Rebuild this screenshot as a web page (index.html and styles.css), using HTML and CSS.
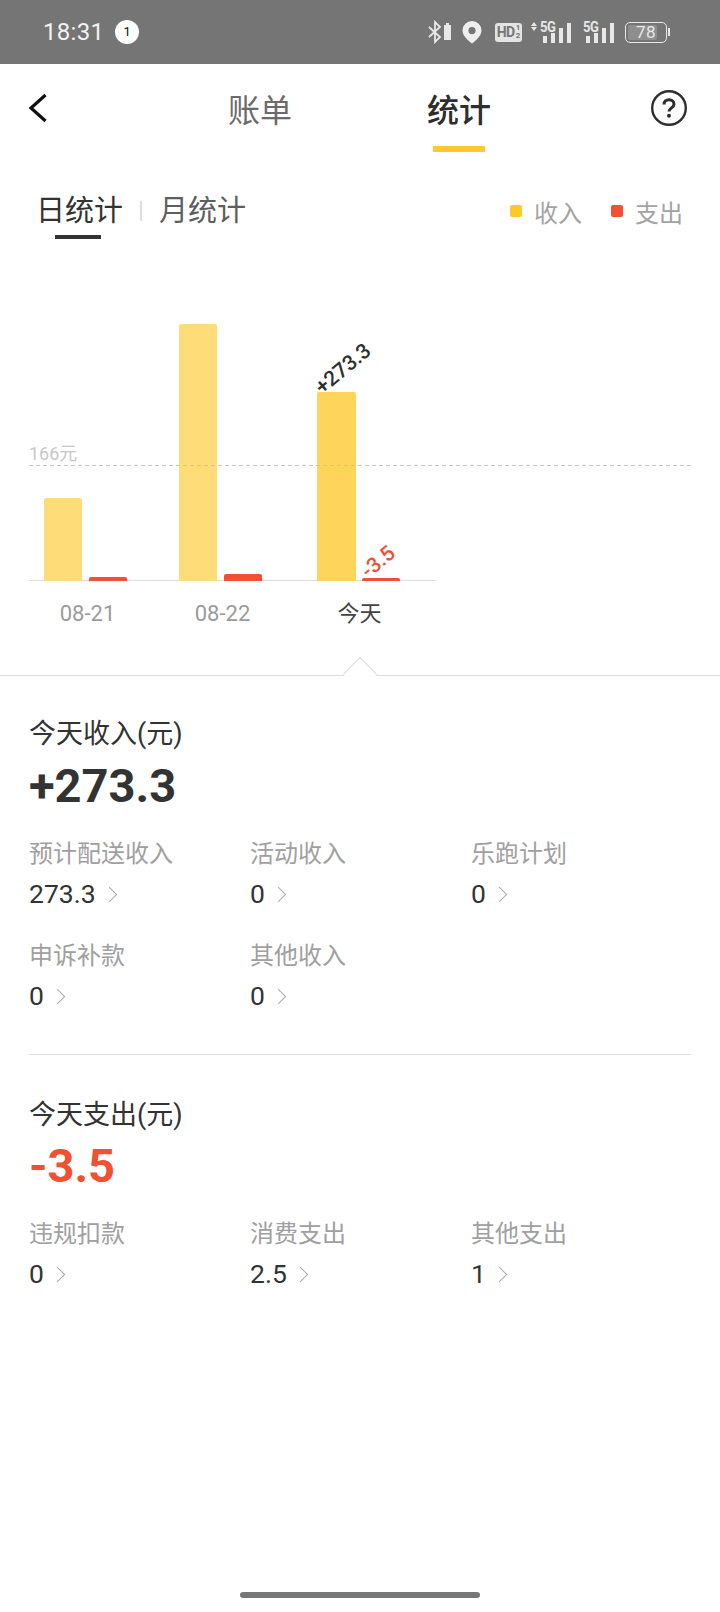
FILE: index.html
```html
<!DOCTYPE html>
<html lang="zh-CN">

<head>
    <meta charset="UTF-8">
    <meta name="viewport" content="width=device-width, initial-scale=1.0">
    <title>统计</title>
    <link rel="stylesheet" href="styles.css">
</head>

<body>
    <div class="status">
        <div class="status-left">
            <span class="time">18:31</span>
            <span class="notice">1</span>
        </div>
        <div class="status-right">
            <svg width="24" height="24" viewBox="0 0 24 24" fill="none">
                <path d="M1 7l11 10-5 5V2l5 5L1 17" stroke="#e8e8e8" stroke-width="1.8" />
                <path d="M16 5h2V3h3v2h2v15h-7z" fill="#e8e8e8" />
            </svg>
            <svg class="pin" width="20" height="24" viewBox="0 0 20 24">
                <path fill-rule="evenodd" fill="#eee" d="M10 1a9.500 9.500 0 0 1 9.500 9.500c0 5-5 9.500-9.500 13-4.500-3.500-9.500-8-9.500-13A9.500 9.500 0 0 1 10 1zm0 6a3.600 3.600 0 1 0 0 7.200A3.600 3.600 0 0 0 10 7z" />
            </svg>
            <span class="hd"><b>HD</b><i>1<br>2</i></span>
            <span class="net">
                <span class="arrows"></span>
                <span class="five">5G</span>
                <span class="sig">
                    <i class="s1"></i><i class="s2"></i><i class="s3"></i><i class="s4"></i>
                </span>
            </span>
            <span class="net second">
                <span class="five">5G</span>
                <span class="sig">
                    <i class="s1"></i><i class="s2"></i><i class="s3"></i><i class="s4"></i>
                </span>
            </span>
            <span class="battery"><span class="level"></span><span class="pct">78</span></span>
            <span class="cap"></span>
        </div>
    </div>

    <header class="nav">
        <svg class="back" width="20" height="30" viewBox="0 0 20 30" fill="none">
            <path d="M17.500 2L3 15l14.500 13" stroke="#111" stroke-width="3.200" />
        </svg>
        <div class="nav-tabs">
            <span class="nav-tab">账单</span>
            <span class="nav-tab active">统计</span>
        </div>
        <svg class="help" width="38" height="38" viewBox="0 0 38 38" fill="none">
            <circle cx="19" cy="19" r="16.800" stroke="#2e2e2e" stroke-width="2.400" />
            <path d="M14 15.500c0-3 2.200-4.800 5-4.800s5 1.900 5 4.500c0 3.600-5 3.800-5 7.400" stroke="#2e2e2e" stroke-width="3" />
            <circle cx="19" cy="26.800" r="2" fill="#2e2e2e" />
        </svg>
    </header>

    <div class="sub">
        <div class="sub-tabs">
            <span class="sub-tab active">日统计</span>
            <span class="sub-sep"></span>
            <span class="sub-tab">月统计</span>
        </div>
        <div class="legend">
            <span class="dot yellow"></span>
            <span class="legend-text">收入</span>
            <span class="dot red"></span>
            <span class="legend-text">支出</span>
        </div>
    </div>

    <div class="chart">
        <div class="avg">
            <span>166元</span>
        </div>
        <div class="plot">
            <div class="group">
                <div class="bar in" style="height: 83px"></div>
                <div class="bar out" style="height: 4px"></div>
            </div>
            <div class="group">
                <div class="bar in" style="height: 257px"></div>
                <div class="bar out" style="height: 7px"></div>
            </div>
            <div class="group">
                <div class="bar in today" style="height: 189px">
                    <span class="tip">+273.3</span>
                </div>
                <div class="bar out" style="height: 3px">
                    <span class="tip minus">-3.5</span>
                </div>
            </div>
        </div>
        <div class="dates">
            <span>08-21</span>
            <span>08-22</span>
            <span class="now">今天</span>
        </div>
    </div>

    <div class="rule">
        <span class="notch"></span>
    </div>

    <section class="block first">
        <h2>今天收入(元)</h2>
        <div class="total">+273.3</div>
        <div class="items">
            <div class="item">
                <div class="label">预计配送收入</div>
                <div class="value">273.3<span class="arrow"></span></div>
            </div>
            <div class="item">
                <div class="label">活动收入</div>
                <div class="value">0<span class="arrow"></span></div>
            </div>
            <div class="item">
                <div class="label">乐跑计划</div>
                <div class="value">0<span class="arrow"></span></div>
            </div>
            <div class="item">
                <div class="label">申诉补款</div>
                <div class="value">0<span class="arrow"></span></div>
            </div>
            <div class="item">
                <div class="label">其他收入</div>
                <div class="value">0<span class="arrow"></span></div>
            </div>
        </div>
    </section>

    <div class="line"></div>

    <section class="block">
        <h2>今天支出(元)</h2>
        <div class="total minus">-3.5</div>
        <div class="items">
            <div class="item">
                <div class="label">违规扣款</div>
                <div class="value">0<span class="arrow"></span></div>
            </div>
            <div class="item">
                <div class="label">消费支出</div>
                <div class="value">2.5<span class="arrow"></span></div>
            </div>
            <div class="item">
                <div class="label">其他支出</div>
                <div class="value">1<span class="arrow"></span></div>
            </div>
        </div>
    </section>

    <div class="home"></div>
</body>

</html>
```

FILE: styles.css
```css
* {
    margin: 0;
    padding: 0;
    box-sizing: border-box;
}

html,
body {
    width: 720px;
    height: 1612px;
    overflow: hidden;
}

body {
    position: relative;
    background: #fff;
    font-family: Roboto, "Noto Sans CJK SC", sans-serif;
    color: #333;
}

/* status bar */
.status {
    height: 64px;
    background: #757575;
    display: flex;
    justify-content: space-between;
    align-items: center;
    padding: 0 50px 0 43px;
    color: #f2f2f2;
}

.status-left {
    display: flex;
    align-items: center;
    gap: 11px;
}

.time {
    font-size: 24px;
    letter-spacing: 0.3px;
}

.notice {
    width: 24px;
    height: 24px;
    border-radius: 50%;
    background: #fff;
    color: #111;
    font-size: 13px;
    line-height: 24px;
    text-align: center;
}

.status-right {
    display: flex;
    align-items: center;
    height: 24px;
}

.pin {
    margin-left: 10px;
}

.hd {
    margin-left: 13px;
    width: 27px;
    height: 19px;
    border-radius: 3px;
    background: #e4e4e4;
    color: #757575;
    display: flex;
    align-items: center;
    justify-content: center;
    gap: 1px;
}

.hd b {
    font-size: 14px;
    letter-spacing: -0.5px;
}

.hd i {
    font-style: normal;
    font-size: 8px;
    font-weight: 700;
    line-height: 8px;
}

.net {
    margin-left: 9px;
    position: relative;
    width: 40px;
    height: 22px;
    display: flex;
    align-items: flex-end;
    justify-content: flex-end;
}

.net.second {
    margin-left: 12px;
    width: 31px;
}

.arrows {
    position: absolute;
    left: 0;
    top: 1px;
    width: 0;
    height: 0;
    border-left: 3.500px solid transparent;
    border-right: 3.500px solid transparent;
    border-bottom: 4px solid #e8e8e8;
}

.arrows::after {
    content: "";
    position: absolute;
    left: -3.500px;
    top: 5px;
    border-left: 3.500px solid transparent;
    border-right: 3.500px solid transparent;
    border-top: 4px solid #e8e8e8;
}

.five {
    position: absolute;
    left: 9px;
    top: -2px;
    font-size: 13px;
    font-weight: 700;
    color: #e8e8e8;
    letter-spacing: -0.5px;
    transform: scaleY(1.150);
}

.net.second .five {
    left: 0;
}

.sig {
    display: flex;
    align-items: flex-end;
    gap: 4px;
}

.sig i {
    display: block;
    width: 4px;
    background: #e8e8e8;
}

.sig .s1 {
    height: 7px;
}

.sig .s2 {
    height: 10px;
}

.sig .s3 {
    height: 15px;
}

.sig .s4 {
    height: 20px;
}

.battery {
    margin-left: 11px;
    position: relative;
    width: 42px;
    height: 21px;
    border: 1.500px solid #e8e8e8;
    border-radius: 5px;
    padding: 2px;
}

.level {
    display: block;
    width: 29px;
    height: 100%;
    background: #8e8e8e;
    border-radius: 2px;
}

.pct {
    position: absolute;
    left: 10px;
    top: -1px;
    font-size: 17px;
    line-height: 20px;
    color: #e8e8e8;
    letter-spacing: 0.5px;
}

.cap {
    margin-left: 1px;
    width: 2px;
    height: 8px;
    background: #e8e8e8;
}

/* top nav */
.nav {
    position: relative;
    height: 104px;
}

.back {
    position: absolute;
    left: 28px;
    top: 29px;
}

.help {
    position: absolute;
    left: 650px;
    top: 25px;
}

.nav-tabs {
    display: flex;
    padding: 23px 0 0 228px;
    gap: 135px;
}

.nav-tab {
    position: relative;
    font-size: 32px;
    line-height: 48px;
    color: #6b6b6b;
}

.nav-tab.active {
    color: #2e2e2e;
    font-weight: 500;
}

.nav-tab.active::after {
    content: "";
    position: absolute;
    left: 6px;
    right: 6px;
    top: 59px;
    height: 6px;
    background: #ffca28;
}

/* day / month switch */
.sub {
    height: 85px;
    display: flex;
    justify-content: space-between;
    padding: 21px 35px 0 36px;
}

.sub-tabs {
    display: flex;
    align-items: center;
    height: 44px;
}

.sub-tab {
    position: relative;
    font-size: 29px;
    line-height: 44px;
    color: #5e5e5e;
}

.sub-tab.active {
    color: #333;
}

.sub-tab.active::after {
    content: "";
    position: absolute;
    left: 19px;
    width: 46px;
    top: 46px;
    height: 4px;
    background: #333;
}

.sub-sep {
    width: 2px;
    height: 20px;
    margin: 0 17px;
    background: #ddd;
}

.legend {
    display: flex;
    align-items: center;
    height: 44px;
    margin-right: 2px;
}

.dot {
    width: 12px;
    height: 12px;
    border-radius: 2px;
    margin-right: 12px;
}

.dot.yellow {
    background: #ffca28;
}

.dot.red {
    background: #f15033;
    margin-left: 29px;
}

.legend-text {
    font-size: 24px;
    color: #a3a3a3;
}

/* chart */
.chart {
    position: relative;
    height: 422px;
    padding-top: 64px;
}

.avg {
    position: absolute;
    left: 29px;
    right: 29px;
    top: 200px;
    height: 13px;
    background: repeating-linear-gradient(90deg, #c4c4c4 0 4px, transparent 4px 7px) left bottom / 100% 1px no-repeat;
    z-index: 2;
}

.avg span {
    position: absolute;
    left: 0;
    top: -11px;
    font-size: 18px;
    line-height: 24px;
    color: #c8c8c8;
}

.plot {
    margin-left: 29px;
    width: 407px;
    height: 264px;
    border-bottom: 1px solid #ddd;
    padding-left: 15px;
    display: grid;
    grid-template-columns: 135px 138px 1fr;
    align-items: end;
}

.group {
    width: 83px;
    display: flex;
    justify-content: space-between;
    align-items: flex-end;
    margin-bottom: -1px;
}

.bar {
    position: relative;
    width: 38px;
    border-radius: 2px 2px 0 0;
}

.bar.in {
    background: #fedd78;
}

.bar.in.today {
    background: #ffd45a;
    width: 39px;
}

.bar.out {
    background: #f15033;
}

.tip {
    position: absolute;
    left: 8px;
    bottom: 100%;
    font-size: 21px;
    font-weight: 500;
    line-height: 22px;
    white-space: nowrap;
    color: #2e2e2e;
    transform-origin: left bottom;
    transform: translateY(6px) rotate(-40deg);
}

.tip.minus {
    left: 9px;
    bottom: calc(100% + 2px);
    color: #f15033;
}

.dates {
    margin: 15px 0 0 46px;
    display: grid;
    grid-template-columns: 135px 138px 83px;
    font-size: 22px;
    line-height: 36px;
    color: #9b9b9b;
}

.dates span {
    width: 83px;
    text-align: center;
}

.dates .now {
    color: #444;
    margin-left: -1px;
}

/* divider with the little notch under the selected day */
.rule {
    position: relative;
    height: 1px;
    background: #ddd;
}

.notch {
    position: absolute;
    left: 348px;
    top: -13px;
    width: 24px;
    height: 24px;
    background: #fff;
    border-left: 1px solid #ddd;
    border-top: 1px solid #ddd;
    transform: rotate(45deg);
}

/* income and expense blocks */
.block {
    position: relative;
    padding: 0 29px;
}

.block.first {
    padding-top: 39px;
}

.block h2 {
    font-size: 27px;
    font-weight: 400;
    line-height: 38px;
    color: #333;
}

.total {
    font-size: 47px;
    font-weight: 700;
    line-height: 56px;
    margin-top: 5px;
    color: #333;
}

.total.minus {
    margin-top: 4px;
    color: #f15033;
}

.items {
    display: grid;
    grid-template-columns: repeat(3, 221px);
    row-gap: 22px;
    margin-top: 22px;
}

.label {
    font-size: 24px;
    line-height: 36px;
    color: #a0a0a0;
}

.value {
    display: flex;
    align-items: center;
    font-size: 26.500px;
    line-height: 44px;
    color: #333;
}

.arrow {
    width: 11px;
    height: 11px;
    margin-left: 8px;
    border-top: 1.500px solid #aaa;
    border-right: 1.500px solid #aaa;
    transform: rotate(45deg);
}

.line {
    height: 1px;
    margin: 36px 29px 41px;
    background: #ddd;
}

.home {
    position: absolute;
    left: 240px;
    top: 1592px;
    width: 240px;
    height: 6px;
    border-radius: 3px;
    background: #777;
}
```
